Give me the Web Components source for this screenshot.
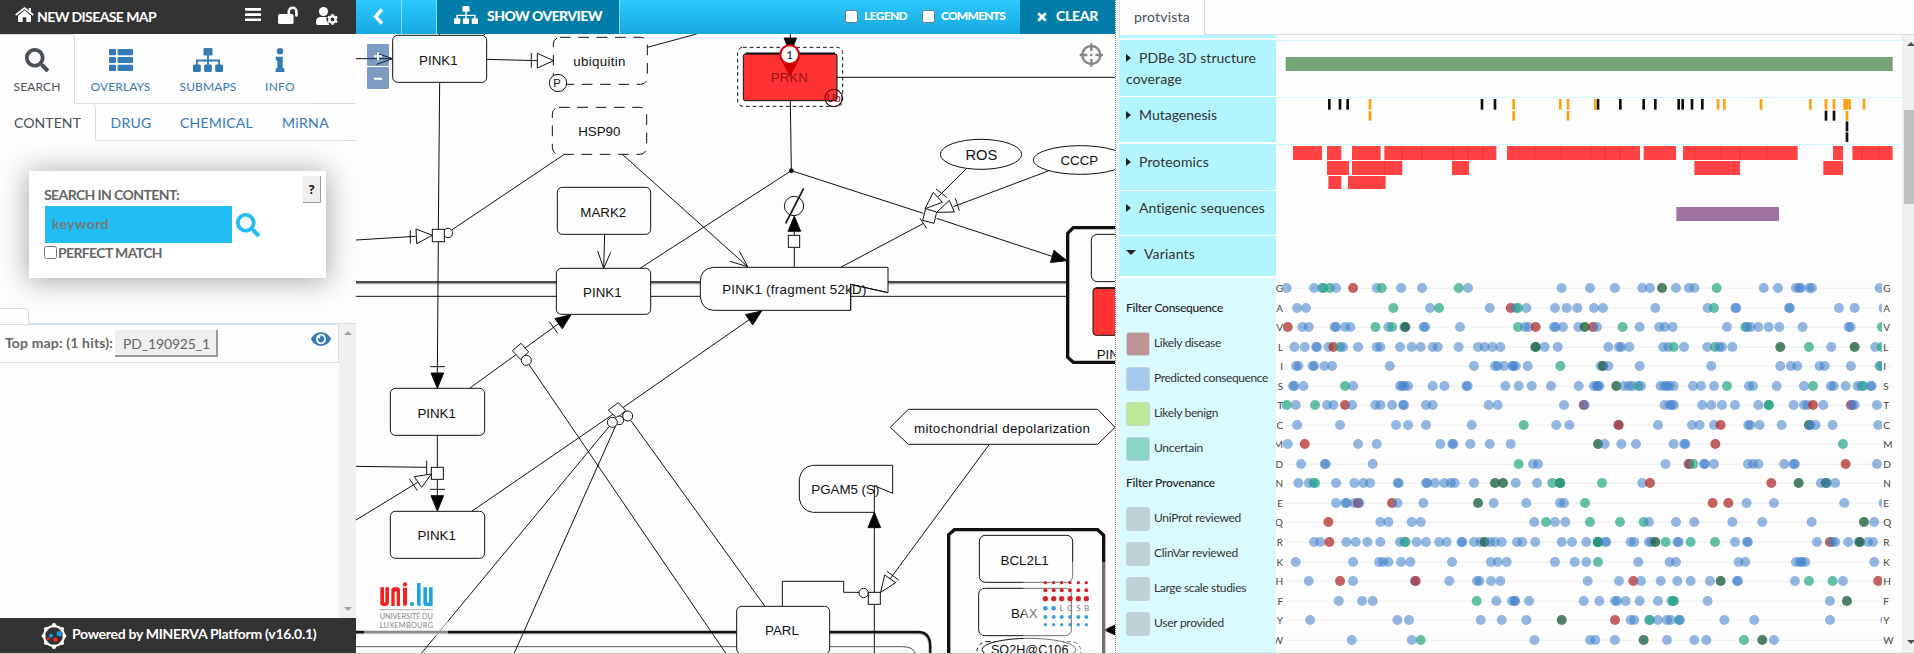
<!DOCTYPE html>
<html lang="en">
<head>
<meta charset="utf-8">
<title>New Disease Map</title>
<style>
body{margin:0;background:#fdfdfd;font-family:Lato,"Liberation Sans",sans-serif}
</style>
</head>
<body>
<disease-app></disease-app>
<script>
const def=(name,html,after)=>customElements.define(name,class extends HTMLElement{
  connectedCallback(){
    if(this.shadowRoot)return;
    const r=this.attachShadow({mode:'open'});
    r.innerHTML=typeof html==='function'?html(this):html;
    if(after)after(this,r);
  }
});

/* ---------- icons ---------- */
const ICONS={
search:['0 0 512 512','<path d="M505 442.7L405.3 343c-4.5-4.5-10.6-7-17-7H372c27.6-35.3 44-79.7 44-128C416 93.1 322.9 0 208 0S0 93.1 0 208s93.1 208 208 208c48.3 0 92.7-16.4 128-44v16.3c0 6.4 2.5 12.5 7 17l99.7 99.7c9.4 9.4 24.6 9.4 33.9 0l28.3-28.3c9.4-9.4 9.4-24.6.1-34zM208 336c-70.7 0-128-57.2-128-128 0-70.7 57.2-128 128-128 70.7 0 128 57.2 128 128 0 70.7-57.2 128-128 128z"/>'],
list:['0 0 24 22','<g><rect width="7" height="6.2" rx="1"/><rect x="8.6" width="15.4" height="6.2" rx="1"/><rect y="7.9" width="7" height="6.2" rx="1"/><rect x="8.6" y="7.9" width="15.4" height="6.2" rx="1"/><rect y="15.8" width="7" height="6.2" rx="1"/><rect x="8.6" y="15.8" width="15.4" height="6.2" rx="1"/></g>'],
sitemap:['0 0 30 24','<rect x="10.5" width="9" height="7.6" rx="1.3"/><rect y="16.4" width="7.8" height="7.6" rx="1.3"/><rect x="11.1" y="16.4" width="7.8" height="7.6" rx="1.3"/><rect x="22.2" y="16.4" width="7.8" height="7.6" rx="1.3"/><path d="M15 7v10M3.9 17v-4.5h22.2V17" fill="none" stroke="currentColor" stroke-width="1.8"/>'],
info:['0 0 10 24','<circle cx="5" cy="3.2" r="3.2"/><path d="M.8 8.8h6.9v11.4h1.7v3.8H.6v-3.8h1.8v-7.6H.8z"/>'],
eye:['0 60 576 392','<path d="M572.52 241.4C518.29 135.59 410.93 64 288 64S57.68 135.64 3.48 241.41a32.35 32.35 0 0 0 0 29.19C57.71 376.41 165.07 448 288 448s230.32-71.64 284.52-177.41a32.35 32.35 0 0 0 0-29.19zM288 400a144 144 0 1 1 144-144 143.93 143.93 0 0 1-144 144zm0-240a95.31 95.31 0 0 0-25.31 3.79 47.85 47.85 0 0 1-66.9 66.9A95.78 95.78 0 1 0 288 160z"/>'],
home:['0 0 19 15','<path d="M9.500 3.300L3 8.800V14.200q0 .8.8.8H7.700V10.200h3.600V15h3.900q.8 0 .8-.8V8.800z"/><path d="M.7 8L9.500 1 18.300 8" fill="none" stroke="currentColor" stroke-width="1.600"/><path d="M13.700 1H16v4.200l-2.300-1.800z"/>'],
bars:['0 0 16 13','<rect width="16" height="2.800" rx=".5"/><rect y="5.200" width="16" height="2.800" rx=".5"/><rect y="10.400" width="16" height="2.800" rx=".5"/>'],
unlock:['0 0 20 18','<rect y="8" width="15.500" height="10" rx="1.600"/><path d="M10.800 9V5.500a3.800 3.800 0 0 1 7.600 0v4" fill="none" stroke="currentColor" stroke-width="2.600" stroke-linecap="round"/>'],
usercog:['0 0 22 18','<circle cx="7.500" cy="4.500" r="4.500"/><path d="M0 16v-1.500C0 11.800 2 10 4.500 10h5c.9 0 1.200.3 1 1-.4 2 .2 4 2.200 5.500.9.800.6 1.400-.4 1.500H2q-2 0-2-2z"/><circle cx="16.500" cy="12.400" r="3.100" fill="none" stroke="currentColor" stroke-width="2.400"/><path d="M16.500 7v10.800M11.800 9.700l9.400 5.400M21.200 9.700l-9.400 5.400" stroke="currentColor" stroke-width="2.200"/><circle cx="16.500" cy="12.400" r="1.900" fill="#333"/>'],
back:['0 0 11 17','<path d="M9 1.500L2.500 8.500 9 15.500" fill="none" stroke="currentColor" stroke-width="3.400"/>'],
close:['0 0 10 10','<path d="M1.200 1.200l7.600 7.600M8.800 1.200L1.200 8.800" stroke="currentColor" stroke-width="2.700"/>'],
minerva:['0 0 26 26','<circle cx="13" cy="13" r="10" fill="#333" stroke="#fff" stroke-width="2.200"/><g fill="#fff"><circle cx="13" cy="2.300" r="2.200"/><circle cx="13" cy="23.700" r="2.200"/><circle cx="2.600" cy="13" r="2"/><circle cx="23.400" cy="13" r="2"/><circle cx="5" cy="6" r="2.100"/><circle cx="21" cy="6" r="2.100"/><circle cx="5" cy="20" r="2.100"/><circle cx="21" cy="20" r="2.100"/></g><circle cx="18.300" cy="10.700" r="2.600" fill="#159fe0"/><circle cx="10" cy="12.700" r="2" fill="#159fe0"/><circle cx="14.500" cy="16.800" r="2.300" fill="#f22"/><circle cx="7" cy="15.500" r="1.500" fill="#f22"/>']
};
def('ui-icon',el=>{
  const [vb,body]=ICONS[el.getAttribute('name')];
  return `<style>:host{display:block;flex:none;width:${el.getAttribute('w')}px;height:${el.getAttribute('h')}px}svg{display:block;width:100%;height:100%;fill:currentColor}</style><svg viewBox="${vb}" preserveAspectRatio="none">${body}</svg>`;
});
def('ui-check','<style>:host{display:block;flex:none;box-sizing:border-box;width:13px;height:13px;border:1px solid #767676;border-radius:2.500px;background:#fff}</style>');
def('scroll-bar',`<style>:host{display:flex;flex-direction:column;align-items:center;justify-content:space-between;background:#f0f0f0;box-sizing:border-box}
i{border:4px solid transparent}.u{border-bottom-color:var(--arrow,#a3a3a3);border-top:0}.d{border-top-color:var(--arrow,#a3a3a3);border-bottom:0}</style><i class="u"></i><slot></slot><i class="d"></i>`);

/* ---------- left panel ---------- */
def('nav-tab',el=>`<style>
:host{display:block;flex:none;box-sizing:border-box;color:#337ab7;border-bottom:1px solid #dee2e6}
:host([active]){color:#495057;border-bottom-color:transparent;border-right:1px solid #d5dde4;border-top:1px solid #d5dde4;border-top-right-radius:4px}
div{display:flex;flex-direction:column;align-items:center}
</style><div><slot name="icon"></slot><slot></slot></div>`);

def('app-header',`<style>
:host{display:flex;height:34px;background:#333;color:#fff;box-sizing:border-box;padding:0 18px 0 15px;align-items:center;font-weight:700;font-size:14px}
.t{margin:-2px 0 0 3px;flex:1}.a{margin-top:-5px}.b{margin:-5px 17px 0 0}.c{margin:-4px 18px 0 0}.d{margin-top:-3px}
</style><ui-icon name="home" w="19" h="15" class="a"></ui-icon><span class="t"><fit-label w="119">NEW DISEASE MAP</fit-label></span>
<ui-icon name="bars" w="16" h="13" class="b"></ui-icon><ui-icon name="unlock" w="20" h="18" class="c"></ui-icon><ui-icon name="usercog" w="22" h="18" class="d"></ui-icon>`);

def('main-tabs',`<style>
:host{display:flex;height:70px;font-size:12px;line-height:18px}
nav-tab{height:70px;padding-top:14px}nav-tab[active]{padding-top:13px}
ui-icon{margin-bottom:6px}span{flex:1;border-bottom:1px solid #d5dde4}
</style>
<nav-tab active style="width:75px"><ui-icon slot="icon" name="search" w="24" h="24"></ui-icon><fit-label w="47">SEARCH</fit-label></nav-tab>
<nav-tab style="width:91px"><ui-icon slot="icon" name="list" w="24" h="22" style="margin:1px 0 7px"></ui-icon><fit-label w="60">OVERLAYS</fit-label></nav-tab>
<nav-tab style="width:84px"><ui-icon slot="icon" name="sitemap" w="30" h="24"></ui-icon><fit-label w="57">SUBMAPS</fit-label></nav-tab>
<nav-tab style="width:60px"><ui-icon slot="icon" name="info" w="10" h="24"></ui-icon><fit-label w="30">INFO</fit-label></nav-tab><span></span>`);

def('sub-tabs',`<style>
:host{display:flex;height:37px;font-size:14px;line-height:20px}
nav-tab{height:37px;padding-top:9px}nav-tab[active]{border-top:0;padding-top:9px}
span{flex:1;border-bottom:1px solid #d5dde4}
</style>
<nav-tab active style="width:96px"><fit-label w="67">CONTENT</fit-label></nav-tab>
<nav-tab style="width:70px"><fit-label w="41">DRUG</fit-label></nav-tab>
<nav-tab style="width:101px"><fit-label w="73">CHEMICAL</fit-label></nav-tab>
<nav-tab style="width:77px"><fit-label w="47">MiRNA</fit-label></nav-tab><span></span>`);

def('search-card',`<style>
:host{display:flex;box-sizing:border-box;width:297px;height:107px;margin:30px 0 0 29px;background:#fff;box-shadow:0 2px 26px 2px rgba(0,0,0,.32);padding:5px 5px 0 15px;color:#666;font-weight:700;font-size:14px;line-height:20px}
.m{flex:1;padding-top:9px}.r{display:flex;align-items:center;gap:4px;padding-left:1px;margin-top:1px}
.i{width:187px;height:37px;background:#22bdf2;color:#777;box-sizing:border-box;padding:8px 7px 0}
.p{display:flex;align-items:center;gap:1px;height:16px;margin-top:1px}.p fit-label{margin-top:2px}.q{box-sizing:border-box;width:18px;height:27px;background:#efefef;border:solid #999;border-width:0 1.500px 1.500px 0;color:#111;font:700 12px/28px "Open Sans",sans-serif;text-align:center}
ui-icon{color:#22bdf2}
</style><div class="m"><fit-label w="135">SEARCH IN CONTENT:</fit-label>
<div class="r"><div class="i"><fit-label w="57">keyword</fit-label></div><ui-icon name="search" w="24" h="24"></ui-icon></div>
<div class="p"><ui-check></ui-check><fit-label w="104">PERFECT MATCH</fit-label></div></div><div class="q">?</div>`);

def('result-list',`<style>
:host{display:flex;flex-direction:column;flex:1;min-height:0}
.tab{display:flex;margin-top:30px;height:16px}.tab b{box-sizing:border-box;width:29px;border:solid #d5dde4;border-width:1px 1px 0 0;border-radius:0 4px 0 0}.tab s{flex:1;border-bottom:1px solid #d5dde4;box-sizing:border-box}
.body{display:flex;flex:1}.list{flex:1}
.row{display:flex;box-sizing:border-box;height:39px;border:1px solid #d5e0e8;border-left:0;padding:5px 7px 0 5px;font-size:14px;line-height:20px;color:#666}
.row strong{padding-top:3px}
.btn{box-sizing:border-box;height:27px;width:103px;margin-left:2px;background:#efefef;border:solid #999;border-width:0 2px 2px 0;padding:4px 0 0 8px}
ui-icon{color:#337ab7;margin:2px 0 0 auto}
scroll-bar{width:17px;padding:7px 0}
</style><div class="tab"><b></b><s></s></div>
<div class="body"><div class="list"><div class="row"><strong><fit-label w="108">Top map: (1 hits):</fit-label></strong><div class="btn"><fit-label w="87">PD_190925_1</fit-label></div><ui-icon name="eye" w="20" h="14"></ui-icon></div></div><scroll-bar></scroll-bar></div>`);

def('app-footer',`<style>:host{display:flex;height:35px;background:#333;color:#fff;font-weight:700;font-size:14px;line-height:20px;padding-left:41px;align-items:center}fit-label{margin:-3px 0 0 5px}</style>
<ui-icon name="minerva" w="26" h="26"></ui-icon><fit-label w="244">Powered by MINERVA Platform (v16.0.1)</fit-label>`);

def('side-panel',`<style>:host{display:flex;flex-direction:column;width:356px;flex:none}</style>
<app-header></app-header><main-tabs></main-tabs><sub-tabs></sub-tabs><search-card></search-card><result-list></result-list><app-footer></app-footer>`);

/* ---------- map ---------- */
def('map-toolbar',`<style>
:host{display:flex;height:34px;background:linear-gradient(#2bc9fd,#16a8e0);color:#fff;font-weight:900;font-size:14px;line-height:20px}
div{display:flex;align-items:center;box-sizing:border-box;flex:none}
.k{width:46px;border-right:1px solid #7fdcff;padding-left:17px}.e{width:35px;border-right:1px solid #7fdcff}
.o{width:183px;background:#007ca8;border-right:1px solid #7fdcff;padding-left:17px}.o fit-label{margin-left:9px}
.x{flex:1;justify-content:flex-end;font-size:12px}.x fit-label{margin:0 15px 0 6px}
.c{width:95px;background:#007ca8;padding-left:17px}.c fit-label{margin-left:9px}
.o ui-icon{margin-top:-5px}.k ui-icon,.c ui-icon{margin-top:-1px}.x ui-check{margin-top:-1px}fit-label{margin-top:-2px!important}
</style><div class="k"><ui-icon name="back" w="11" h="17"></ui-icon></div><div class="e"></div>
<div class="o"><ui-icon name="sitemap" w="24" h="18"></ui-icon><fit-label w="115">SHOW OVERVIEW</fit-label></div>
<div class="x"><ui-check></ui-check><fit-label w="43">LEGEND</fit-label><ui-check></ui-check><fit-label w="64">COMMENTS</fit-label></div>
<div class="c"><ui-icon name="close" w="10" h="10"></ui-icon><fit-label w="42">CLEAR</fit-label></div>`);

/* The diagram canvas uses three units for each pixel. */
const B=1140,D=972;
const line=(...p)=>`<polyline points="${p.join(' ')}"/>`;
const poly=(...p)=>`<polygon points="${p.join(' ')}"/>`;
const fpoly=(...p)=>`<polygon points="${p.join(' ')}" fill="#000"/>`;
const box=(x1,y1,x2,y2,r=0,a='')=>`<rect x="${x1}" y="${y1}" width="${x2-x1}" height="${y2-y1}" rx="${r}" ${a}/>`;
const circ=(x,y,r,a='')=>`<circle cx="${x}" cy="${y}" r="${r}" ${a}/>`;
const txt=(s,x,y,f=40,a='')=>`<text x="${x}" y="${y}" font-size="${f}" ${a}>${s}</text>`;
const arrow=(tx,ty,fx,fy)=>{const d=Math.hypot(fx-tx,fy-ty),u=(fx-tx)/d,v=(fy-ty)/d,bx=tx+u*46,by=ty+v*46;return fpoly(tx,ty,bx-v*19,by+u*19,bx+v*19,by-u*19)};
const at=(dx,dy,s)=>`<g transform="translate(${dx} ${dy})">${s}</g>`;
def('pathway-map',()=>{
let s='';
/* compartment membranes */
s+=`<g stroke="#a3a59f" stroke-width="4">${line(3,851,2135,851)}</g><g stroke-width="5">${line(3,846,2135,846)}</g>`+line(3,889,2135,889);
s+=`<g stroke="#b9a9a5" stroke-width="4"><path d="M3 1901H1690Q1722 1901 1722 1940V1960"/></g><path d="M3 1896H1690Q1726 1896 1726 1940V1960" stroke-width="7"/><path d="M3 1940H1640Q1676 1940 1680 1960" stroke="#555"/>`;
/* edges */
s+=line(3,176,113,176)+line(65,160,113,176,65,193)+line(254,102,254,106)+line(375,110,392,102)+line(254,247,250,688)+line(250,725,247,1120)
+line(395,178,547,182)+line(529,159,529,203)+poly(547,160,547,204,596,182)+line(877,142,1025,102)
+line(628,463,290,690)+circ(279,699,14)+box(232,688,268,725)+line(3,720,182,709)+line(166,691,166,731)+poly(183,687,185,731,232,706)
+line(802,463,1178,800)+line(1125,784,1178,800,1153,753)+line(749,703,746,805)+line(728,753,746,805,767,757)
+line(855,805,1309,512)+circ(1309,512,6,'fill="#000"')+line(225,1100,270,1100)+arrow(247,1165,247,1000)
+line(345,1164,648,944)+arrow(648,944,345,1164)+line(583,965,608,1000)+poly(498,1030,521,1056,497,1078,472,1052)+circ(514,1081,15)+line(523,1095,1112,1959)
+line(350,1534,768,1247,805,1222,1220,933)+arrow(1220,933,805,1222)+line(762,1280,200,1959)+line(783,1275,478,1959)+line(828,1262,1230,1819)+poly(790,1208,812,1231,786,1255,760,1230)+circ(793,1261,13)+circ(772,1267,15)+circ(818,1248,15);
s+=at(0,D,line(247,334,247,430)+box(229,430,265,466)+line(247,466,247,520)+line(225,496,270,496)+arrow(247,561,247,400)+line(3,427,215,430)+line(215,410,215,450)+line(3,588,188,475)+poly(229,450,178,458,200,490)+line(163,464,187,500)
+box(106,193,389,334,15)+box(106,562,389,703,15)+txt('PINK1',245,282)+txt('PINK1',245,648));
/* nodes, left part */
s+=box(113,106,395,247,15)+txt('PINK1',250,196)+box(595,112,877,253,20,'stroke-dasharray="32 23"')+txt('ubiquitin',733,198,40,'textLength="157"')+circ(609,249,26)+txt('P',606,262,34)
+box(592,322,875,463,20,'stroke-dasharray="32 23"')+txt('HSP90',733,408)+box(607,562,887,703,15)+txt('MARK2',745,651)+box(604,805,887,943,15)+txt('PINK1',742,891);
/* nodes, right part */
s+=at(B,0,line(166,90,166,120)+fpoly(147,114,185,114,166,160)+box(8,142,323,319,16,'stroke-dasharray="11 9"')+line(306,232,1140,232)+line(166,302,169,512)
+circ(296,294,26)+box(25,162,306,302,6,'fill="#f33"')+'<path d="M32 160H300" stroke-width="5"/>'+circ(296,294,26,'fill="none" stroke="#400"')+txt('Ub',296,307,34,'style="fill:#7a1010"')+txt('PRKN',163,246,40,'style="fill:#991414"')
+'<g stroke="none"><path d="M135 175L165 230 195 175z" fill="#d60000"/></g>'+circ(164,164,28,'stroke="#d60000" stroke-width="6"')+txt('1',164,176,33,'style="font-family:Lato;font-weight:700;fill:#444"')
+'<g stroke="#858585" stroke-width="7"><circle cx="1069" cy="165" r="27"/><path d="M1069 130V153M1069 177V200M1034 165H1057M1081 165H1104"/></g>'+circ(1069,165,4,'fill="#858585" stroke="none"')
+line(169,512,565,640)+line(605,655,960,772)+arrow(996,782,850,740)+line(317,802,566,670)+line(555,655,575,685)
+line(610,590,693,507)+poly(570,626,595,577,622,607)+line(603,567,635,592)+line(655,620,942,512)+poly(605,637,643,601,658,636)+line(661,595,673,632)+poly(572,626,605,636,597,670,563,661)
+'<ellipse cx="738" cy="463" rx="122" ry="45"/><ellipse cx="1036" cy="480" rx="141" ry="43"/>'+txt('ROS',739,479,44)+txt('CCCP',1033,495)
+line(178,802,178,742)+box(160,706,194,742)+line(178,706,178,690)+arrow(178,648,178,700)+circ(177,618,29)+'<path d="M152 670L206 565" stroke-width="5"/>'
+'<path d="M459 802H-65Q-104 806-104 845V890Q-100 928-65 931H347V853L459 878Z"/>'+txt('PINK1 (fragment 52kD)',178,882,40,'textLength="433"')+'<path d="M347 931V853L459 878"/>'
+'<path d="M1160 683H1015L998 700V1072L1015 1087H1160" stroke-width="10"/>'+box(1069,703,1250,845,18)+box(1074,864,1250,1006,10,'fill="#f33"')+'<path d="M1082 864H1140" stroke-width="5"/>'+txt('PIN',1085,1076,40,'style="text-anchor:start"'));
s+=at(B,D,box(5,847,284,990,15)+txt('PARL',141,933)+line(142,847,142,772,326,772,326,805,372,805)+circ(386,807,14)+'<path d="M473 424H233Q200 428 193 464V525Q200 560 233 565H418V485L473 508Z"/>'+line(418,565,418,990)+arrow(418,565,418,700)+box(400,805,436,841)+txt('PGAM5 (S)',331,510)
+poly(466,310,520,256,1088,256,1140,310,1088,361,520,361)+txt('mitochondrial depolarization',801,326,40,'textLength="528"')
+line(763,361,465,765)+poly(437,805,449,753,482,776)+line(456,742,491,768)
+'<path d="M641 1010V632L658 617H1088L1106 634V1010" stroke-width="10"/>'+box(733,634,1013,775,18)+box(731,793,1009,935,18)+txt('BAX',868,882)
+box(726,953,1038,1060,30,'stroke-dasharray="11 9"')+'<ellipse cx="882" cy="977" rx="141" ry="34"/>'+fpoly(1108,918,1143,902,1143,934)
+'<rect x="865" y="714" width="250" height="280" style="fill:#fff;fill-opacity:.4;stroke:none"/>'+txt('SO2H@C106',884,990,38)+txt('BCL2L1',869,723));
let dots='';[[776,5],[799,6],[824,8],[853,7],[879,6],[902,5]].forEach(([y,r],j)=>[931,956,980,1005,1030,1054].forEach((x,i)=>{if(j!==3||i<2)dots+=circ(x,y,r,`style="stroke:none;fill:${j<3?'#d8232a':'#38a0dc'}"`)}));
['L','C','S','B'].forEach((c,i)=>dots+=txt(c,980+i*25,861,24,'style="fill:#777;font-family:Lato"'));
s+=at(B,D,dots);
/* university logo */
s+=at(0,D,'<rect x="27" y="765" width="252" height="170" style="fill:#fff;fill-opacity:.5;stroke:none"/>'
+`<g stroke="none"><path d="M76 790H87V834Q89 838 91 834V790H102V838Q100 846 92 846H86Q76 846 76 838ZM109 846V798Q109 790 118 790H127Q135 790 135 798V846H125V802H119V846ZM144 791H156V839Q156 846 150 846 144 846 144 839Z" fill="#f5211f"/><circle cx="150" cy="781" r="6.500" fill="#f5211f"/><path d="M186 777H197V846H193Q186 846 186 839ZM205 790H216V834Q219 838 222 834V790H233V846H213Q205 846 205 838Z" fill="#1ba6e0"/><circle cx="171" cy="840" r="6" fill="#1ba6e0"/></g><path d="M74 857H234" stroke="#aaa"/>`
+txt('UNIVERSITÉ DU',154,885,22,'textLength="160" style="fill:#858585;font-family:Lato"')+txt('LUXEMBOURG',154,911,22,'textLength="160" style="fill:#858585;font-family:Lato"'));
/* zoom control */
s+='<g style="stroke:none">'+box(36,132,102,198,4,'fill="#003c88" fill-opacity=".5"')+box(36,201,102,267,4,'fill="#003c88" fill-opacity=".5"')+'</g><g stroke="#fff" stroke-width="6"><path d="M57 169H81M69 157V181M57 236H81"/></g>';
return `<style>:host{display:block;flex:1;min-height:0}svg{display:block;width:759px;height:619px;background:#fdfdfd;fill:none;stroke:#111;stroke-width:3}
rect,circle,polygon,ellipse,path[d$="Z"]{fill:#fdfdfd}
[fill="#000"]{fill:#000}[fill="#f33"]{fill:#f33}[fill="none"]{fill:none}[fill="#003c88"]{fill:#003c88}[fill="#f5211f"]{fill:#f5211f!important}[fill="#1ba6e0"]{fill:#1ba6e0!important}[fill="#858585"]{fill:#858585}
text{fill:#111;stroke:none;text-anchor:middle;font-family:"Liberation Sans",Arial,sans-serif}polyline{fill:none}</style><svg viewBox="3 102 2277 1857">${s}</svg>`;
});
def('map-panel',`<style>:host{display:flex;flex-direction:column;width:759px;flex:none;border-right:1px dotted #777}</style><map-toolbar></map-toolbar><pathway-map></pathway-map>`);

/* ---------- protein features ---------- */
const X=p=>typeof p==='string'?+p.slice(1)+714:p-483;
const mark=(x,y,h,c)=>`<rect x="${X(x)-4}" y="${y}" width="8" height="${h}" fill="${c}"/>`;
const block=(a,b,y,h,c)=>`<rect x="${X(a)}" y="${y}" width="${X(b)-X(a)}" height="${h}" fill="${c}"/>`;
const TRACKS={
none:'',
structure:block(512,'R1136',51,42,'#74a477'),
mutagenesis:[643,675,698,1101,1140,'R252','R319','R389','R424','R494','R506','R534','R565'].map(x=>mark(x,6,32,'#111')).join('')
 +[765,1196,'R139','R162','R244','R612','R631','R741','R889','R936','R960','R992','R998','R1007','R1050'].map(x=>mark(x,6,32,'#ffa011')).join('')
 +[765,1196,'R162','R999'].map(x=>mark(x,42,29,'#ffa011')).join('')+['R936','R960'].map(x=>mark(x,41,30,'#111')).join('')+mark('R999',73,30,'#111')+mark('R999',106,29,'#111'),
proteomics:[[534,621],[636,679],[711,797],[808,1144],[1176,'R378'],['R389','R486'],['R507','R851'],['R957','R987'],['R1015','R1136']].map(([a,b])=>block(a,b,6,42,'#ff4345')).join('')
 +[[636,702],[711,862],[1011,1062],['R541','R678'],['R928','R987']].map(([a,b])=>block(a,b,51,42,'#ff4345')).join('')+[[640,679],[699,812]].map(([a,b])=>block(a,b,96,39,'#ff4345')).join('')
 +[861,920,1014,1060,1104,'R63','R141','R231','R273','R317','R543','R621','R679','R759','R1044','R1095'].map(x=>`<rect x="${X(x)-1.5}" y="6" width="3" height="42" fill="#f03538"/>`).join('')+`<rect x="${X(806)}" y="51" width="3" height="42" fill="#f03538"/>`,
antigenic:block('R487','R795',48,42,'#a072a2')
};
def('feature-track',el=>`<style>
:host{display:flex;box-sizing:border-box;height:${el.getAttribute('h')}px;margin-bottom:${el.getAttribute('gap')||0}px}
.l{box-sizing:border-box;width:157px;flex:none;background:#b2f5ff;color:#333;font-size:14px;line-height:21px;padding:${el.getAttribute('pad')||7}px 0 0 7px}
.t{flex:1;${el.hasAttribute('line')?'box-shadow:inset 0 1px #d2f8ff':''}}svg{display:block;width:626px;height:100%;overflow:visible}
i{display:inline-block;border:4px solid transparent;border-left:5px solid #222;border-right:0;margin-right:8px;vertical-align:1px}
:host([open]) i{border:5px solid transparent;border-top:5px solid #222;border-bottom:0;vertical-align:4px}
</style><div class="l">${el.hasAttribute('blank')?'':'<i></i>'}<slot></slot></div><div class="t"><svg viewBox="0 0 1878 ${el.getAttribute('h')*3}">${TRACKS[el.getAttribute('kind')]}</svg></div>`);

def('legend-item',el=>`<style>:host{display:flex;height:35px;align-items:center;font-size:12px;color:#333}
i{box-sizing:border-box;width:24px;height:24px;border-radius:3px;background:${el.getAttribute('color')};border:1px solid #c6d2d8;margin-right:4px}::slotted(*){margin-top:-2px}</style><i></i><slot></slot>`);
def('variant-filter',`<style>:host{display:block;box-sizing:border-box;width:157px;flex:none;background:#d9faff;padding:13px 0 0 7px;color:#222}
h4{margin:0;height:35px;font-weight:500;font-size:12px;line-height:33px}</style>
<h4><fit-label w="97">Filter Consequence</fit-label></h4>
<legend-item color="#bd9494"><fit-label w="67">Likely disease</fit-label></legend-item>
<legend-item color="#a6c9ee"><fit-label w="114">Predicted consequence</fit-label></legend-item>
<legend-item color="#bde898"><fit-label w="64">Likely benign</fit-label></legend-item>
<legend-item color="#8ad5c6"><fit-label w="49">Uncertain</fit-label></legend-item>
<h4><fit-label w="89">Filter Provenance</fit-label></h4>
<legend-item color="#bfd3d7"><fit-label w="87">UniProt reviewed</fit-label></legend-item>
<legend-item color="#bfd3d7"><fit-label w="84">ClinVar reviewed</fit-label></legend-item>
<legend-item color="#bfd3d7"><fit-label w="92">Large scale studies</fit-label></legend-item>
<legend-item color="#bfd3d7"><fit-label w="70">User provided</fit-label></legend-item>`);

/* Residue rows: b predicted, r disease, g uncertain, d mixed sources. */
const ROWS={
G:['515 597 621 g625 g644 663 r714 785 g800 858 921 g1031 1059','143 228 303 385 408 d444 486 525 541 g608 749 792 846 856 860 886 894 1097'],
A:['546 573 g835 945 g972 1124 r1187','5 g12 37 123 158 190 240 267 424 581 g600 664 667 825 828 975 1022 1109'],
V:['r518 562 581 659 663 690 706 g781 820 g831 868 d871 926 930 1035','g12 33 44 r65 120 125 147 193 d212 r237 249 g326 377 436 452 476 639 g694 700 710 733 764 796 866 1004 1010 g1104'],
L:['538 569 603 606 640 r655 g675 684 729 785 796 855 890 917 953 968 1031 1089 1109 1132 1156','64 d65 92 131 283 315 322 346 448 463 g479 510 580 g603 616 624 655 d799 g885 952 d1022 1084 g1104'],
I:['543 550 593 597 628 651 824 1077 1140 1148 1167 1193','-3 5 41 g139 260 d267 283 377 592 799 831 850 917 932 1011 g1097 1104'],
S:['534 538 565 g690 714 855 861 868 879 953 988 1054 1058 1171','14 53 111 194 240 248 252 256 d307 330 345 355 g373 381 440 452 460 466 479 537 561 600 g639 705 717 788 870 g897 951 959 995 1031 1042 g1048 1070 1073'],
T:['g515 542 g600 636 655 r690 711 781 796 831 864 867 933 953 1121 1148','150 r209 212 452 467 473 480 565 592 624 663 733 g764 g765 839 870 880 r897 928 r1011 1015 1022 1089'],
C:['546 675 843 879 933 1070','g29 127 166 313 r314 432 534 557 600 r620 703 709 737 803 d885 890 905 956 1093'],
M:['518 r569 729 785 976 1012 1015 1066 1124 1187','d252 272 322 366 479 511 514 r604 g987'],
D:['558 629 632 773','g14 57 72 455 523 r526 g538 570 573 600 702 717 733 811 839 843 r995 1089'],
N:['550 581 595 g600 663 718 745 765 848 851 933 937 960 988 1007 1019 1077 d1140 d1164','5 69 g115 d138 g139 g264 385 r408 r772 d854 921 d936 939 964'],
E:['663 691 695 718 r729 733 r831 847 925 d1089 1136','37 138 150 g213 r596 r643 698 780 991 1109'],
Q:['r640 796 820 890 917','61 g96 123 154 g228 g318 g389 405 486 541 655 745 893 d1050 1081'],
R:['597 616 r643 694 722 757 796 855 868 g872 905 933 972 995 1039 1042 1077 1097 d1109 1125 1140 1160','9 25 64 143 174 217 g251 d252 g253 274 277 350 361 405 412 d424 g455 490 494 g530 g603 663 699 702 909 r948 956 964 1003 1034 d1038 1062 1077'],
K:['542 714 792 804 820 858 886 1011 1128 1148 1175','123 182 217 g252 373 467 486 674 694 846 858 864 874 1081'],
H:['581 r675 714 899 r902 1003 1086 1093 1128 1156','221 315 r358 381 440 490 530 588 d620 669 672 843 g885 g956 987 r1093'],
F:['671 741 773 g1085 1144 1191 1199','3 45 209 256 303 310 335 377 432 472 g477 g480 581 948 d999'],
Y:['585 847 882 1097 1160','37 d143 r303 350 361 405 g408 432 459 470 g495 498 631 721 948 1114'],
W:['710 890 g917','61 228 244 303 d389 459 541 577 g690 d745 780']};
const FILL={b:['#4080cc',.56],r:['#ab1f1f',.7],g:['#24a583',.7],d:['#1f6342',.8]};
def('variant-row',el=>{
  const k=el.getAttribute('residue'),[a,b]=ROWS[k];
  const dot=(t,off)=>{const m=t.match(/^([rgd]?)(-?\d+)$/),f=FILL[m[1]||'b'];return `<circle cx="${+m[2]+off}" cy="30" r="15" fill="${f[0]}" fill-opacity="${f[1]}"/>`};
  return `<style>:host{display:block;flex:1;min-height:0}svg{display:block;width:626px;height:19.520px}text{font:30px Lato,sans-serif;fill:#444}</style>
<svg viewBox="0 0 1878 58.560"><defs><clipPath id="c"><rect y="-5" width="1818" height="70"/></clipPath></defs><rect x="30" y="29" width="1818" height="3" fill="#ededed"/><text x="21" y="41" text-anchor="end">${k}</text><g clip-path="url(#c)">${a.split(' ').map(t=>dot(t,-483)).join('')}${b.split(' ').map(t=>dot(t,714)).join('')}</g><text x="1822" y="41">${k}</text></svg>`;
});
def('variant-plot',`<style>:host{display:flex;flex-direction:column;flex:1;height:370.880px;padding-top:.3px}</style>${Object.keys(ROWS).map(k=>`<variant-row residue="${k}"></variant-row>`).join('')}`);

def('protein-panel',`<style>
:host{display:flex;flex-direction:column;flex:1;min-width:0;padding-left:3px}
.tabs{display:flex;height:35px;font-size:14px;line-height:20px;color:#495057}
.tab{box-sizing:border-box;width:86px;border:solid #d5dde4;border-width:0 1px;padding:7px 0 0 14px}.sp{flex:1;border-bottom:1px solid #d5dde4;box-sizing:border-box}
.body{display:flex;flex:1;min-height:0}.tracks{width:783px;flex:none}.v{display:flex;height:375px}
scroll-bar{width:17px;flex:none;padding:7px 0 9px;--arrow:#505050}
.th{width:13px;height:94px;background:#c1c1c1;margin:64px 0 auto}
</style><div class="tabs"><div class="tab"><fit-label w="56">protvista</fit-label></div><div class="sp"></div></div>
<div class="body"><div class="tracks">
<feature-track kind="none" h="3" gap="2" pad="0" blank></feature-track>
<feature-track kind="structure" h="56" gap="1" line><fit-label w="117">PDBe 3D structure</fit-label><br><fit-label w="56">coverage</fit-label></feature-track>
<feature-track kind="mutagenesis" h="45" gap="2" line><fit-label w="78">Mutagenesis</fit-label></feature-track>
<feature-track kind="proteomics" h="46" gap="1" line><fit-label w="70">Proteomics</fit-label></feature-track>
<feature-track kind="antigenic" h="44" gap="1" pad="6"><fit-label w="126">Antigenic sequences</fit-label></feature-track>
<feature-track kind="none" h="40" gap="2" open><fit-label w="51">Variants</fit-label></feature-track>
<div class="v"><variant-filter></variant-filter><variant-plot></variant-plot></div>
</div><scroll-bar><div class="th"></div></scroll-bar></div>`);

def('disease-app',`<style>:host{display:flex;width:1914px;height:654px;box-sizing:border-box;border-bottom:1px solid #c8c8c8;overflow:hidden}</style>
<side-panel></side-panel><map-panel></map-panel><protein-panel></protein-panel>`);

/* A text run that spreads its letters over a set width. */
def('fit-label','<style>:host{display:inline-block;white-space:nowrap;flex:none}</style><slot></slot>',el=>{
  const w=+el.getAttribute('w'),n=el.getBoundingClientRect().width;
  el.style.letterSpacing=(w-n)/el.textContent.length+'px';
});
</script>
</body>
</html>
